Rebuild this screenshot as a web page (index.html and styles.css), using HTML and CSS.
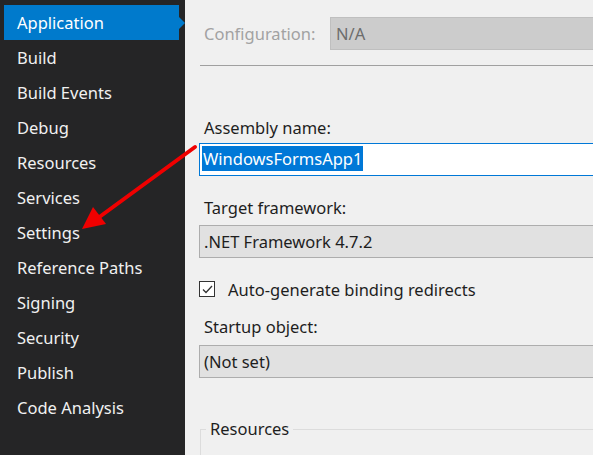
FILE: index.html
```html
<!DOCTYPE html>
<html lang="en">
<head>
    <meta charset="UTF-8">
    <meta name="viewport" content="width=device-width, initial-scale=1.0">
    <title>WindowsFormsApp1 - Properties</title>
    <link rel="stylesheet" href="styles.css">
</head>
<body>
    <div class="window">
        <!-- Property page tabs -->
        <nav class="tabs">
            <div class="tab active">Application</div>
            <div class="tab">Build</div>
            <div class="tab">Build Events</div>
            <div class="tab">Debug</div>
            <div class="tab">Resources</div>
            <div class="tab">Services</div>
            <div class="tab">Settings</div>
            <div class="tab">Reference Paths</div>
            <div class="tab">Signing</div>
            <div class="tab">Security</div>
            <div class="tab">Publish</div>
            <div class="tab">Code Analysis</div>
        </nav>

        <main class="page">
            <div class="config-row">
                <span class="config-label">Configuration:</span>
                <div class="field disabled">N/A</div>
            </div>
            <div class="separator"></div>

            <label class="label first">Assembly name:</label>
            <div class="field textbox"><span class="selection">WindowsFormsApp1</span></div>

            <label class="label">Target framework:</label>
            <div class="field combo">.NET Framework 4.7.2</div>

            <div class="check-row">
                <span class="checkbox">
                    <svg width="11" height="9" viewBox="0 0 11 9"><path d="M1 4.5 L4 7.5 L10 1" fill="none" stroke="#333" stroke-width="1.3"/></svg>
                </span>
                <span>Auto-generate binding redirects</span>
            </div>

            <label class="label startup">Startup object:</label>
            <div class="field combo">(Not set)</div>

            <fieldset class="group">
                <legend>Resources</legend>
            </fieldset>
        </main>

        <!-- annotation arrow pointing at the Settings tab -->
        <svg class="annotation" width="593" height="455" viewBox="0 0 593 455">
            <line x1="195" y1="147" x2="98" y2="218" stroke="#f00000" stroke-width="4" stroke-linecap="round"/>
            <polygon points="82,229 93,207 106,224" fill="#f00000"/>
        </svg>
    </div>
</body>
</html>
```
FILE: styles.css
```css
* { box-sizing: border-box; margin: 0; padding: 0; }
body { font-family: 'Noto Sans', 'Open Sans', sans-serif; background: #f0f0f0; }
.window { position: relative; display: flex; width: 593px; height: 455px; overflow: hidden; }

/* Left tab strip */
.tabs { width: 185px; flex-shrink: 0; background: #252526; padding: 5px 6px 0 4px; }
.tab {
    position: relative; height: 35px; line-height: 36px; padding-left: 13px;
    color: #f1f1f1; font-size: 16.5px;
}
.tab.active { background: #007acc; color: #fff; }
.tab.active::after {
    content: ''; position: absolute; right: -6px; top: 12px;
    border-left: 6px solid #007acc; border-top: 6px solid transparent; border-bottom: 6px solid transparent;
}

/* Property page */
.page { flex: 1; padding: 17px 0 0 14px; overflow: hidden; font-size: 16.5px; color: #1e1e1e; }
.config-row { display: flex; align-items: center; height: 33px; }
.config-label { width: 131px; padding-left: 5px; color: #a2a2a2; line-height: 35px; }
.field {
    height: 33px; line-height: 31px; padding-left: 4px; margin-right: -20px;
    border: 1px solid #adadad; white-space: nowrap;
}
.field.disabled { flex: 1; background: #cccccc; border-color: #bfbfbf; color: #6d6d6d; padding-left: 5px; line-height: 32px; }
.separator { height: 1px; background: #a0a0a0; margin: 15px 0 0 1px; }

.label { display: block; padding-left: 5px; line-height: 20px; margin-top: 22px; }
.label.first { margin-top: 52px; }
.label.startup { margin-top: 18px; }

.textbox { background: #fff; border-color: #0078d7; margin-top: 5px; padding-left: 2px; line-height: 29px; }
.selection { display: inline-block; background: #0078d7; color: #fff; line-height: 25px; padding: 0 1px; }
.combo { background: #e1e1e1; margin-top: 7px; }
.label.startup + .combo { margin-top: 8px; }

.check-row { display: flex; align-items: center; gap: 13px; height: 20px; margin-top: 21px; }
.checkbox {
    display: flex; align-items: center; justify-content: center;
    width: 16px; height: 16px; border: 1px solid #333; background: #fff;
}

.group {
    margin: 42px -20px 0 1px; height: 60px; padding: 0 5px;
    border: 1px solid #dcdcdc; border-right: none;
}
.group legend { padding: 0 4px; line-height: 18px; }

.annotation { position: absolute; left: 0; top: 0; pointer-events: none; }
```
